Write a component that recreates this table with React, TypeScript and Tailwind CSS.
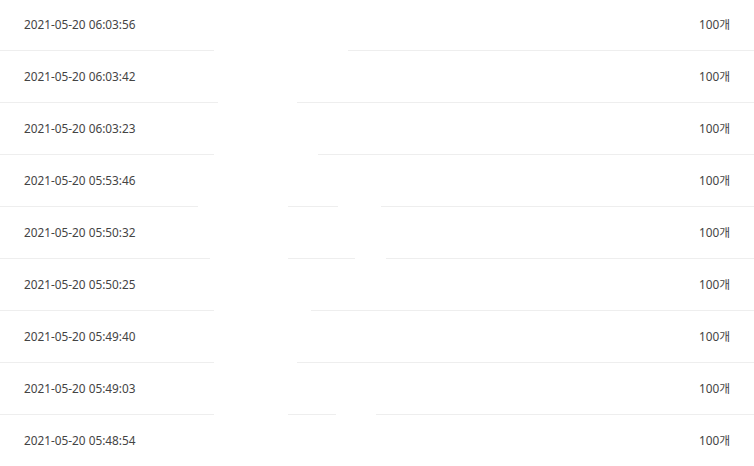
const rows = [
  { time: "2021-05-20 06:03:56", gaps: [[214, 348]] },
  { time: "2021-05-20 06:03:42", gaps: [[218, 297]] },
  { time: "2021-05-20 06:03:23", gaps: [[214, 318]] },
  { time: "2021-05-20 05:53:46", gaps: [[198, 288], [338, 381]] },
  { time: "2021-05-20 05:50:32", gaps: [[210, 288], [355, 386]] },
  { time: "2021-05-20 05:50:25", gaps: [[214, 311]] },
  { time: "2021-05-20 05:49:40", gaps: [[214, 297]] },
  { time: "2021-05-20 05:49:03", gaps: [[214, 288], [336, 376]] },
  { time: "2021-05-20 05:48:54", gaps: [] as number[][] },
];

export default function App() {
  return (
    <div
      className="w-[754px] h-[466px] overflow-hidden bg-white text-[11.8px] text-[#444]"
      style={{ fontFamily: '"Noto Sans", "Noto Sans CJK KR", sans-serif' }}
    >
      <ul className="-mt-px">
        {rows.map((r) => (
          <li
            key={r.time}
            className="relative h-[52px] flex items-center justify-between px-6 border-b border-[#eeeeee]"
          >
            <span>{r.time}</span>
            <span>100개</span>
            {/* masked parts of the divider */}
            {r.gaps.map(([a, b]) => (
              <span
                key={a}
                className="absolute -bottom-px h-px bg-white"
                style={{ left: a, width: b - a }}
              />
            ))}
          </li>
        ))}
      </ul>
    </div>
  );
}
